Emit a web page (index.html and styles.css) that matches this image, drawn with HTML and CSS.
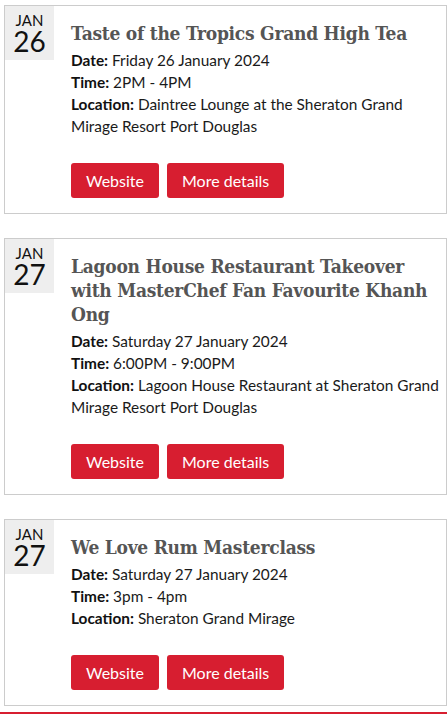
FILE: index.html
```html
<!DOCTYPE html>
<html>
<head>
<meta charset="utf-8">
<link rel="stylesheet" href="styles.css">
</head>
<body>
<div class="events">
  <div class="card">
    <div class="date"><span class="mon">JAN</span><span class="day">26</span></div>
    <div class="content">
      <h3 class="title">Taste of the Tropics Grand High Tea</h3>
      <p class="line"><b>Date:</b> Friday 26 January 2024</p>
      <p class="line"><b>Time:</b> 2PM - 4PM</p>
      <p class="line"><b>Location:</b> Daintree Lounge at the Sheraton Grand Mirage Resort Port Douglas</p>
      <div class="actions"><a class="btn">Website</a><a class="btn">More details</a></div>
    </div>
  </div>
  <div class="card">
    <div class="date"><span class="mon">JAN</span><span class="day">27</span></div>
    <div class="content">
      <h3 class="title">Lagoon House Restaurant Takeover with MasterChef Fan Favourite Khanh Ong</h3>
      <p class="line"><b>Date:</b> Saturday 27 January 2024</p>
      <p class="line"><b>Time:</b> 6:00PM - 9:00PM</p>
      <p class="line"><b>Location:</b> Lagoon House Restaurant at Sheraton Grand Mirage Resort Port Douglas</p>
      <div class="actions"><a class="btn">Website</a><a class="btn">More details</a></div>
    </div>
  </div>
  <div class="card">
    <div class="date"><span class="mon">JAN</span><span class="day">27</span></div>
    <div class="content">
      <h3 class="title">We Love Rum Masterclass</h3>
      <p class="line"><b>Date:</b> Saturday 27 January 2024</p>
      <p class="line"><b>Time:</b> 3pm - 4pm</p>
      <p class="line"><b>Location:</b> Sheraton Grand Mirage</p>
      <div class="actions"><a class="btn">Website</a><a class="btn">More details</a></div>
    </div>
  </div>
</div>
<div class="footer"></div>
</body>
</html>
```
FILE: styles.css
```css
html, body {
  margin: 0;
  padding: 0;
  background: #fff;
}
body {
  font-family: Lato, "Open Sans", sans-serif;
  color: #222;
  width: 447px;
  overflow: hidden;
}
.events {
  padding: 5px 0 0 4px;
}
.card {
  display: flex;
  align-items: flex-start;
  border: 1px solid #cccccc;
  margin-bottom: 24px;
}
.card:last-child {
  margin-bottom: 6px;
}
.date {
  width: 49px;
  height: 54px;
  background: #eeeeee;
  display: flex;
  flex-direction: column;
  align-items: center;
  color: #111;
  flex: none;
}
.mon {
  font-size: 15px;
  line-height: 14px;
  margin-top: 7px;
}
.day {
  font-size: 28px;
  line-height: 26px;
  margin-top: 1px;
}
.content {
  padding: 15px 2px 15px 17px;
  flex: 1;
}
.title {
  margin: 0 0 4px 0;
  font-family: "DejaVu Serif Condensed", "DejaVu Serif", serif;
  font-weight: bold;
  font-size: 19px;
  letter-spacing: -0.25px;
  line-height: 24px;
  color: #555555;
}
.line {
  margin: 0;
  font-size: 15.4px;
  line-height: 22px;
  color: #1a1a1a;
}
.line b {
  font-weight: bold;
  color: #111;
}
.actions {
  display: flex;
  gap: 8px;
  margin-top: 26px;
}
.btn {
  display: block;
  background: #d71e30;
  color: #fff;
  font-size: 16px;
  line-height: 19px;
  padding: 8px 15px;
  border-radius: 3px;
}
.footer {
  height: 3px;
  background: #d71e30;
}
```
